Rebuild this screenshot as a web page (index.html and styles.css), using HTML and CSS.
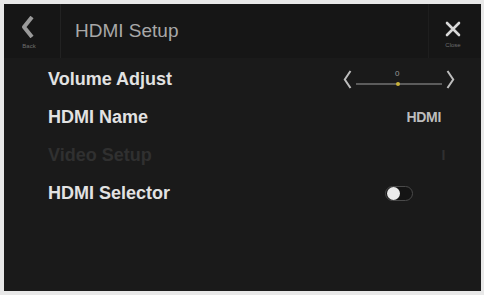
FILE: index.html
```html
<!DOCTYPE html>
<html>
<head>
<meta charset="utf-8">
<link rel="stylesheet" href="styles.css">
</head>
<body>
<div class="frame">
  <div class="screen">
    <header class="topbar">
      <div class="navbtn back">
        <svg width="14" height="22" viewBox="0 0 14 22"><path d="M11 1 L3 11 L11 21" fill="none" stroke="#9a9a9a" stroke-width="4" stroke-linejoin="round"/></svg>
        <span class="navlabel">Back</span>
      </div>
      <div class="title">HDMI Setup</div>
      <div class="navbtn close">
        <svg width="16" height="16" viewBox="0 0 16 16"><path d="M2 2 L14 14 M14 2 L2 14" stroke="#d8d8d8" stroke-width="2.6" stroke-linecap="round"/></svg>
        <span class="navlabel">Close</span>
      </div>
    </header>
    <div class="list">
      <div class="row">
        <span class="label">Volume Adjust</span>
        <div class="slider">
          <svg class="chev" width="9" height="19" viewBox="0 0 9 19"><path d="M7.5 1 L1.8 9.5 L7.5 18" fill="none" stroke="#bdbdbd" stroke-width="2"/></svg>
          <div class="track">
            <span class="val">0</span>
            <span class="line"></span>
            <span class="dot"></span>
          </div>
          <svg class="chev" width="9" height="19" viewBox="0 0 9 19"><path d="M1.5 1 L7.2 9.5 L1.5 18" fill="none" stroke="#bdbdbd" stroke-width="2"/></svg>
        </div>
      </div>
      <div class="row">
        <span class="label">HDMI Name</span>
        <span class="value">HDMI</span>
      </div>
      <div class="row dim">
        <span class="label">Video Setup</span>
        <span class="value vs">I</span>
      </div>
      <div class="row">
        <span class="label">HDMI Selector</span>
        <div class="toggle"><span class="knob"></span></div>
      </div>
    </div>
  </div>
</div>
</body>
</html>
```

FILE: styles.css
```css
html, body {
  margin: 0;
  padding: 0;
  background: #f2f2f2;
}
body {
  width: 484px;
  height: 295px;
  font-family: "Liberation Sans", Arial, sans-serif;
}
.frame {
  padding: 4px 3px 4px 4px;
  box-sizing: border-box;
  width: 484px;
  height: 295px;
  background: #e8e8e8;
}
.screen {
  width: 100%;
  height: 100%;
  background: #1a1a1a;
  display: flex;
  flex-direction: column;
}
.topbar {
  height: 54px;
  display: flex;
  align-items: stretch;
  background: #161616;
}
.navbtn {
  width: 56px;
  display: flex;
  flex-direction: column;
  align-items: center;
  justify-content: center;
  gap: 5px;
}
.back {
  border-right: 1px solid #222;
  padding-top: 2px;
}
.back svg { margin-left: -8px; }
.back .navlabel { margin-left: -6px; }
.close {
  border-left: 1px solid #1e1e1e;
  padding-top: 4px;
  width: 52px;
}
.close svg { margin-top: 2px; margin-left: -4px; }
.close .navlabel { margin-left: -4px; }
.navlabel {
  font-size: 6px;
  color: #6e6e6e;
}
.title {
  flex: 1;
  display: flex;
  align-items: center;
  padding-left: 14px;
  padding-bottom: 1px;
  font-size: 19px;
  color: #a8a8a8;
}
.list {
  display: flex;
  flex-direction: column;
  padding: 2px 40px 0 44px;
}
.row {
  height: 38px;
  display: flex;
  align-items: center;
  justify-content: space-between;
}
.label {
  font-size: 18px;
  font-weight: bold;
  color: #e2e2e2;
}
.value {
  font-size: 14px;
  font-weight: bold;
  color: #bdbdbd;
  letter-spacing: -0.3px;
}
.dim .label, .dim .value {
  color: #303030;
}
.value.vs { margin-right: -4px; }
.slider {
  display: flex;
  align-items: center;
  gap: 4px;
  margin-right: -14px;
}
.track {
  position: relative;
  width: 86px;
  height: 22px;
}
.track .line {
  position: absolute;
  left: 0;
  right: 0;
  top: 15px;
  height: 2px;
  background: #5c5c5c;
}
.track .dot {
  position: absolute;
  left: 40px;
  top: 14px;
  width: 4px;
  height: 4px;
  border-radius: 50%;
  background: #c9b23a;
}
.track .val {
  position: absolute;
  left: 39px;
  top: 1px;
  font-size: 8px;
  color: #999;
}
.toggle {
  position: relative;
  width: 26px;
  height: 13px;
  border: 1px solid #4a4a4a;
  border-radius: 8px;
  margin-right: 28px;
  background: #141414;
}
.knob {
  position: absolute;
  left: 1px;
  top: 0px;
  width: 13px;
  height: 13px;
  border-radius: 50%;
  background: #eaeaea;
}
```
